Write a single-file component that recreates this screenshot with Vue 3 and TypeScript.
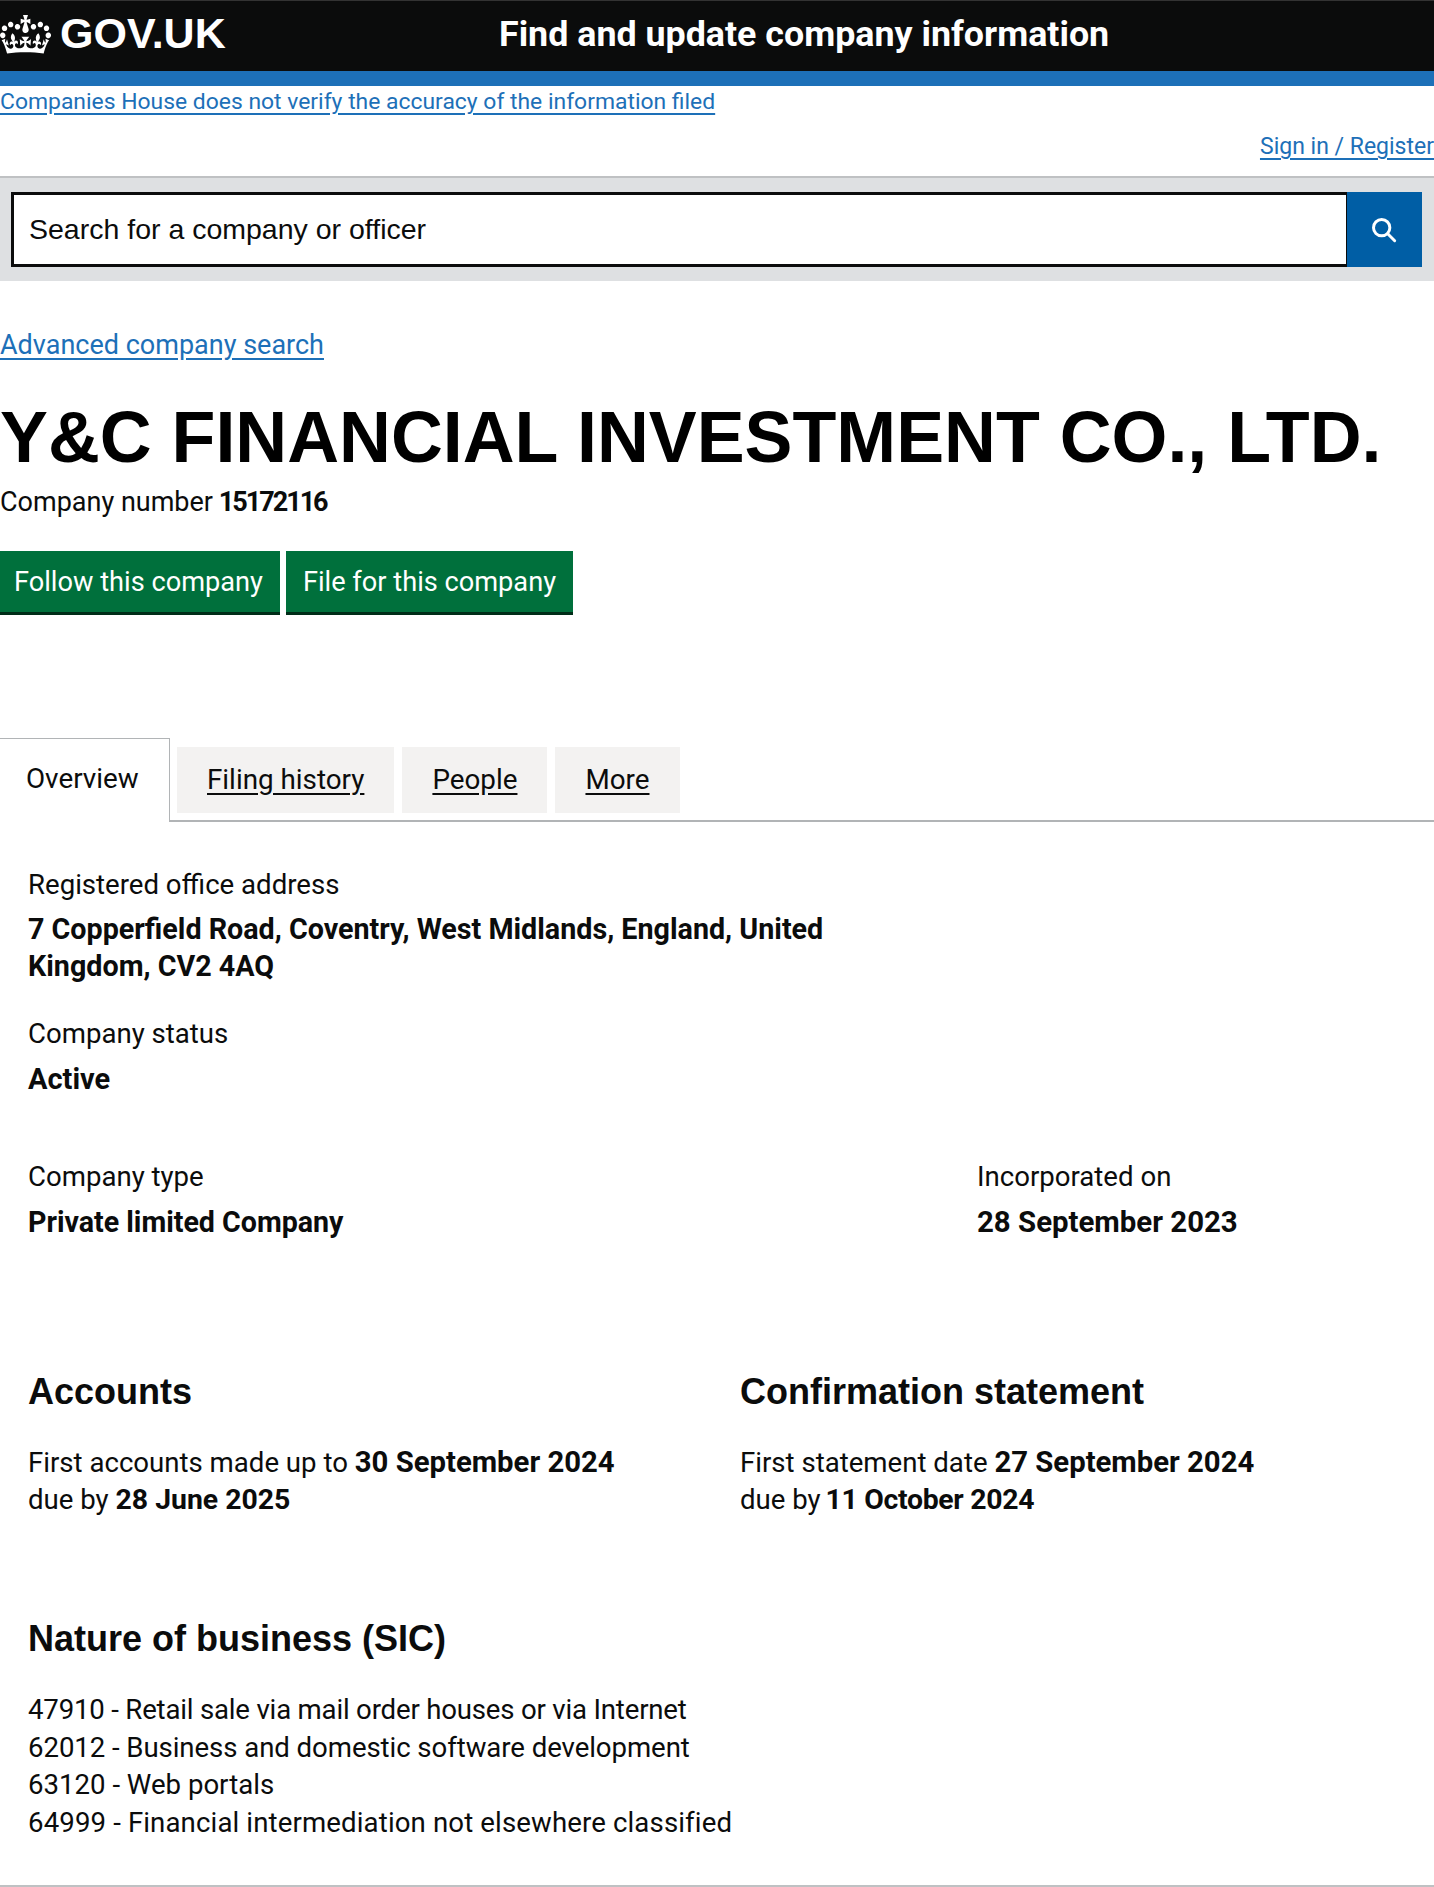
<script setup lang="ts">
const tabs = ['Filing history', 'People', 'More']
const sic = [
  '47910 - Retail sale via mail order houses or via Internet',
  '62012 - Business and domestic software development',
  '63120 - Web portals',
  '64999 - Financial intermediation not elsewhere classified',
]
</script>

<template>
  <div class="page">
    <header class="top">
      <div class="brand">
        <svg class="crown" viewBox="0 0 132 97" preserveAspectRatio="none" aria-hidden="true">
          <path fill="#fff" fill-rule="evenodd" d="M25 30.2c3.5 1.5 7.7-.2 9.1-3.7 1.5-3.6-.2-7.8-3.9-9.2-3.6-1.4-7.6.3-9.1 3.9-1.4 3.5.3 7.5 3.9 9zM9 39.5c3.6 1.5 7.8-.2 9.2-3.7 1.5-3.6-.2-7.8-3.9-9.1-3.6-1.5-7.6.2-9.1 3.8-1.4 3.5.3 7.5 3.8 9zM4.4 57.2c3.5 1.5 7.7-.2 9.1-3.8 1.5-3.6-.2-7.7-3.9-9.1-3.5-1.5-7.6.3-9.1 3.8-1.4 3.5.3 7.6 3.9 9.1zm38.3-21.4c3.5 1.5 7.7-.2 9.1-3.8 1.5-3.6-.2-7.7-3.9-9.1-3.6-1.5-7.6.3-9.1 3.8-1.3 3.6.4 7.7 3.9 9.1zm64.4-5.6c-3.6 1.5-7.8-.2-9.1-3.7-1.5-3.6.2-7.8 3.8-9.2 3.6-1.4 7.7.3 9.2 3.9 1.3 3.5-.4 7.5-3.9 9zm15.9 9.3c-3.6 1.5-7.7-.2-9.1-3.7-1.5-3.6.2-7.8 3.7-9.1 3.6-1.5 7.7.2 9.2 3.8 1.5 3.5-.3 7.5-3.8 9zm4.7 17.7c-3.6 1.5-7.8-.2-9.2-3.8-1.5-3.6.2-7.7 3.9-9.1 3.6-1.5 7.7.3 9.2 3.8 1.3 3.5-.4 7.6-3.9 9.1zM89.3 35.8c-3.6 1.5-7.8-.2-9.2-3.8-1.4-3.6.2-7.7 3.9-9.1 3.6-1.5 7.7.3 9.2 3.8 1.4 3.6-.3 7.7-3.9 9.1zM69.7 17.7l8.9 4.7V9.3l-8.9 2.8c-.2-.3-.5-.6-.9-.9L72.4 0H59.6l3.6 11.2c-.3.3-.6.5-.9.9l-8.8-2.8v13.1l8.8-4.7c.3.3.6.7.9.9l-5 15.4v.1c-.2.8-.4 1.6-.4 2.4 0 4.1 3.1 7.5 7 8.1h.2c.3 0 .7.1 1 .1.4 0 .7 0 1-.1h.2c4-.6 7.1-4.1 7.1-8.1 0-.8-.1-1.7-.4-2.4V34l-5.1-15.4c.4-.2.7-.6 1-.9zM66 92.8c16.9 0 32.8 1.1 47.1 3.2 4-16.9 8.9-26.7 14-33.5l-9.6-3.4c1 4.9 1.1 7.2 0 10.2-1.5-1.4-3-4.3-4.2-8.7L108.6 76c2.8-2 5-3.2 7.5-3.3-4.4 9.4-10 11.9-13.6 11.2-4.3-.8-6.3-4.6-5.6-7.9 1-4.7 5.7-5.9 8-.5 4.3-8.7-3-11.4-7.6-8.8 7.1-7.2 7.9-13.5 2.1-21.1-8 6.1-8.1 12.3-4.5 20.8-4.7-5.4-12.1-2.5-9.5 6.2 3.4-5.2 7.9-2 7.2 3.1-.6 4.3-6.4 7.8-13.5 7.2-10.3-.9-10.9-8-11.2-13.8 2.5-.5 7.1 1.8 11 7.3L80.2 60c-4.1 4.4-8 5.3-12.3 5.4 1.4-4.4 8-11.6 8-11.6H55.5s6.4 7.2 7.9 11.6c-4.2-.1-8-1-12.3-5.4l1.4 16.4c3.9-5.5 8.5-7.7 10.9-7.3-.3 5.8-.9 12.8-11.1 13.8-7.2.6-12.9-2.9-13.5-7.2-.7-5 3.8-8.3 7.1-3.1 2.7-8.7-4.6-11.6-9.4-6.2 3.7-8.5 3.6-14.7-4.6-20.8-5.8 7.6-5 13.9 2.2 21.1-4.7-2.6-11.9.1-7.7 8.8 2.3-5.5 7.1-4.2 8.1.5.7 3.3-1.3 7.1-5.7 7.9-3.5.7-9-1.8-13.5-11.2 2.5.1 4.7 1.3 7.5 3.3l-4.7-15.4c-1.2 4.4-2.7 7.2-4.3 8.7-1.1-3-.9-5.3 0-10.2l-9.5 3.4c5 6.9 9.9 16.7 14 33.5 14.8-2.1 30.8-3.2 47.7-3.2z" />
        </svg>
        <span class="logo-text">GOV.UK</span>
      </div>
      <span class="service">Find and update company information</span>
    </header>
    <div class="band"></div>

    <div class="notice"><a class="link">Companies House does not verify the accuracy of the information filed</a></div>
    <div class="signin"><a class="link">Sign in / Register</a></div>

    <div class="search">
      <div class="search-input">Search for a company or officer</div>
      <div class="search-btn">
        <svg width="26" height="26" viewBox="0 0 28 28" fill="none" stroke="#fff" stroke-width="3.2" aria-hidden="true">
          <circle cx="11.5" cy="11.5" r="8.8" />
          <line x1="18" y1="18" x2="25.5" y2="25.5" stroke-linecap="round" />
        </svg>
      </div>
    </div>

    <div class="advanced"><a class="link">Advanced company search</a></div>

    <h1 class="title">Y&amp;C FINANCIAL INVESTMENT CO., LTD.</h1>
    <p class="number">Company number <strong>15172116</strong></p>

    <div class="actions">
      <a class="btn">Follow this company</a>
      <a class="btn">File for this company</a>
    </div>

    <nav class="tabs">
      <div class="tab active">Overview</div>
      <a v-for="t in tabs" :key="t" class="tab">{{ t }}</a>
    </nav>

    <main class="content">
      <section class="field address">
        <div class="label">Registered office address</div>
        <div class="value">7 Copperfield Road, Coventry, West Midlands, England, United Kingdom, CV2 4AQ</div>
      </section>
      <section class="field status">
        <div class="label">Company status</div>
        <div class="value">Active</div>
      </section>
      <section class="type-row">
        <div class="field">
          <div class="label">Company type</div>
          <div class="value">Private limited Company</div>
        </div>
        <div class="field">
          <div class="label">Incorporated on</div>
          <div class="value">28 September 2023</div>
        </div>
      </section>
      <section class="cols">
        <div>
          <h2>Accounts</h2>
          <p>First accounts made up to <strong>30 September 2024</strong><br />due by <strong class="due">28 June 2025</strong></p>
        </div>
        <div>
          <h2>Confirmation statement</h2>
          <p>First statement date <strong>27 September 2024</strong><br />due by <strong class="due">11 October 2024</strong></p>
        </div>
      </section>
      <section class="sic">
        <h2>Nature of business (SIC)</h2>
        <ul>
          <li v-for="s in sic" :key="s">{{ s }}</li>
        </ul>
      </section>
    </main>
  </div>
</template>

<style>
html, body { margin: 0; background: #fff; }
</style>

<style scoped>
.page {
  width: 1434px;
  height: 1887px;
  overflow: hidden;
  position: relative;
  font-family: Roboto, "Noto Sans", sans-serif;
  font-size: 24px;
  color: #0b0c0c;
  box-sizing: border-box;
  border-bottom: 2px solid #bfc1c3;
}
.top {
  height: 71px;
  box-sizing: border-box;
  background: #0b0c0c;
  border-top: 1px solid #333;
  padding-bottom: 5px;
  display: flex;
  align-items: center;
  color: #fff;
}
.brand { display: flex; align-items: center; width: 499px; flex: none; }
.crown { width: 51px; height: 39px; flex: none; margin: 2px 9px 0 0; }
.logo-text { font: bold 43px "Liberation Sans", sans-serif; }
.service { font-size: 35.8px; font-weight: 700; }
.band { height: 15px; background: #1d70b8; }
.link { color: #1d70b8; text-decoration: underline; text-underline-offset: 4px; }
.notice { line-height: 30px; font-size: 22.9px; margin-top: 1px; }
.signin { text-align: right; line-height: 30px; margin-top: 15px; white-space: nowrap; font-size: 23px; }
.search {
  margin-top: 14px;
  height: 105px;
  box-sizing: border-box;
  background: #dee0e2;
  border-top: 2px solid #bfc1c3;
  padding: 14px 12px 14px 11px;
  display: flex;
}
.search-input {
  flex: 1;
  box-sizing: border-box;
  background: #fff;
  border: 3px solid #0b0c0c;
  border-right-width: 1px;
  display: flex;
  align-items: center;
  padding-left: 15px;
  font: 28.5px "Liberation Sans", sans-serif;
}
.search-btn {
  width: 75px;
  background: #005ea5;
  display: flex;
  align-items: center;
  justify-content: center;
  padding-right: 2px;
  box-sizing: border-box;
}
.advanced { margin-top: 48px; line-height: 32px; font-size: 27px; }
.title {
  font: bold 71.8px/80px "Liberation Sans", sans-serif;
  color: #000;
  margin: 36px 0 0;
  white-space: nowrap;
}
.number { margin: 9px 0 0; line-height: 32px; font-size: 27px; }
.number strong { letter-spacing: -2px; margin-left: -1px; }
.actions { display: flex; gap: 6px; margin: 33px 0 0 -3px; }
.btn {
  box-sizing: border-box;
  height: 64px;
  background: #00703c;
  border-bottom: 3px solid #002d18;
  color: #fff;
  font-size: 27.2px;
  padding: 0 17px;
  display: flex;
  align-items: center;
}
.tabs {
  display: flex;
  align-items: flex-start;
  gap: 8px;
  margin-top: 123px;
  height: 82px;
  border-bottom: 2px solid #b1b4b6;
  box-sizing: content-box;
}
.tab {
  margin-top: 9px;
  height: 66px;
  padding: 0 30px 2px;
  box-sizing: border-box;
  background: #f3f2f1;
  display: flex;
  align-items: center;
  font-size: 27.8px;
  text-decoration: underline;
  text-underline-offset: 4px;
  color: #0b0c0c;
}
.tab.active {
  margin-top: 0;
  margin-right: -1px;
  height: 84px;
  width: 170px;
  padding: 0 0 4px 26px;
  background: #fff;
  border: 1px solid #b1b4b6;
  border-left: 0;
  border-bottom: 0;
  text-decoration: none;
}
.content { padding: 44px 0 0 28px; font-size: 27.6px; }
.label { line-height: 37px; }
.value { font-weight: 700; line-height: 37px; margin-top: 9px; font-size: 29px; }
.address { width: 830px; }
.address .value { font-size: 28.7px; margin-top: 8px; }
.status { margin-top: 30px; }
.type-row { display: flex; margin-top: 60px; }
.type-row > .field:first-child { width: 949px; }
.type-row > .field:first-child .value { font-size: 28.6px; }
.type-row > .field:last-child .value { font-size: 29.4px; }
.cols { display: flex; margin-top: 129px; }
.cols > div:first-child { width: 712px; flex: none; }
h2 { font: bold 36px/44px "Liberation Sans", sans-serif; margin: 0; }
.cols p { margin: 30px 0 0; line-height: 37px; }
.cols strong { font-size: 29.3px; }
.cols strong.due { font-size: 28.4px; }
.cols > div:last-child strong.due { letter-spacing: -0.3px; margin-left: -2px; }
.sic { margin-top: 99px; }
.sic ul { list-style: none; margin: 30px 0 0; padding: 0; }
.sic li { line-height: 37.6px; white-space: nowrap; }
.sic li:nth-child(1) { letter-spacing: -0.19px; }
.sic li:nth-child(2) { letter-spacing: -0.07px; }
.sic li:nth-child(4) { letter-spacing: 0.13px; }
</style>
